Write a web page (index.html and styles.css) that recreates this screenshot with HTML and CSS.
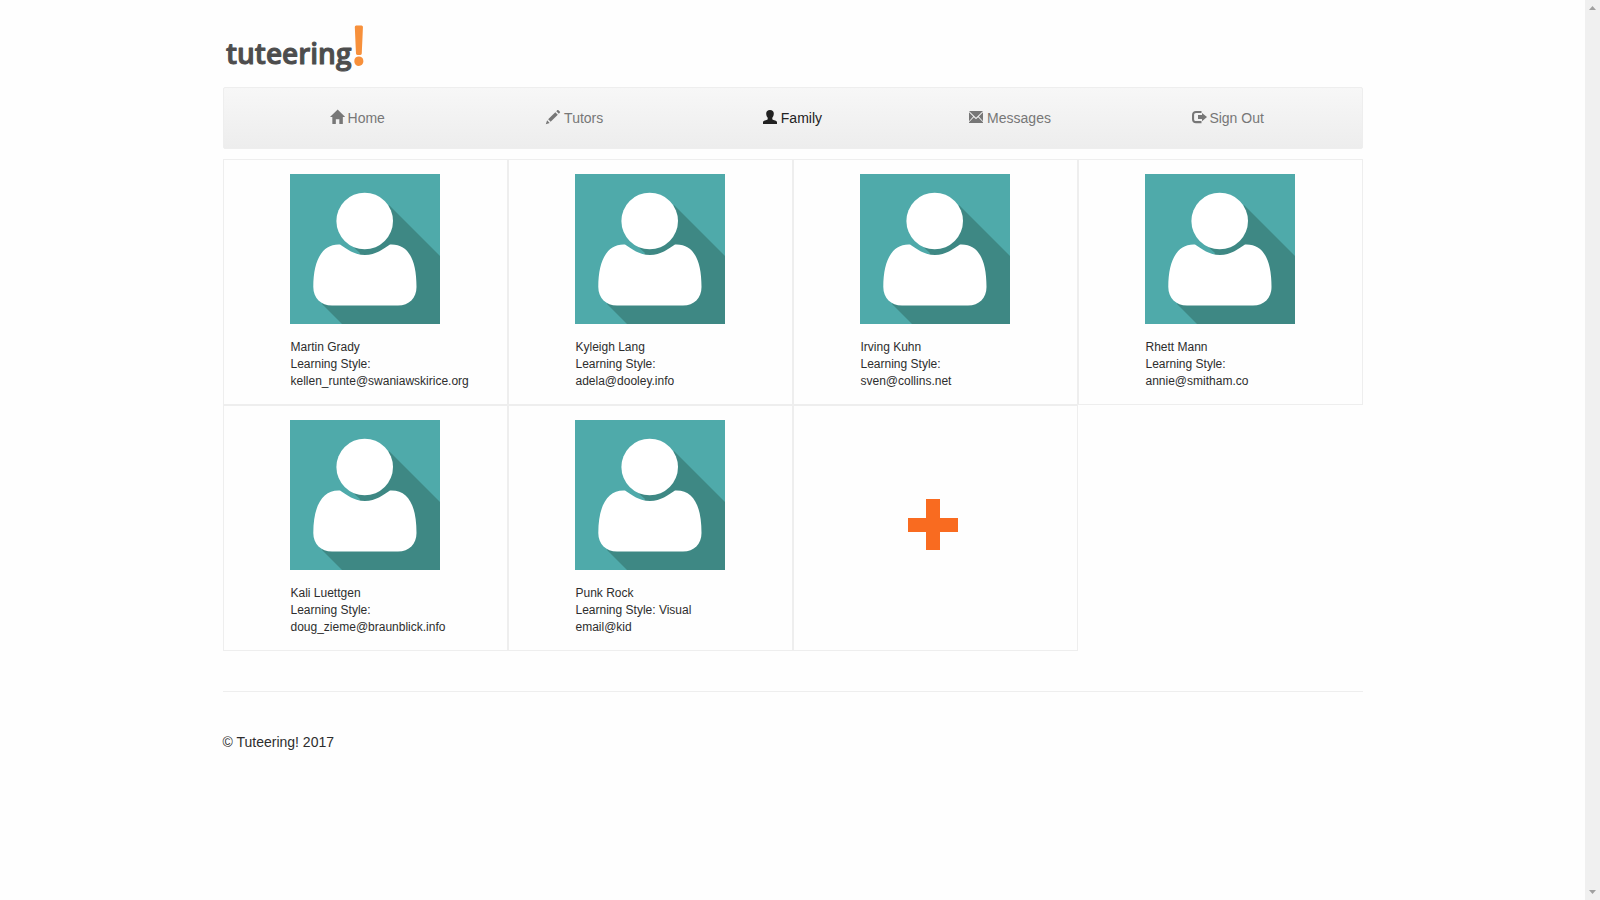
FILE: index.html
```html
<!DOCTYPE html>
<html lang="en">
<head>
<meta charset="utf-8">
<title>Tuteering!</title>
<link rel="stylesheet" href="styles.css">
</head>
<body>
<svg class="defs" aria-hidden="true">
  <symbol id="avatar" viewBox="0 0 150 150">
    <rect width="150" height="150" fill="#4faaaa"/>
    <path d="M99 31 150 82V150H52L32 130 60 100 70 79 61 71z" fill="#3e8884"/>
    <path d="M48 70C52 71 62 80 68 80L60 72z" fill="#4faaaa"/>
    <circle cx="74.700" cy="47" r="28.300" fill="#fff"/>
    <path d="M50 70.500C57 75 64 81 75 81S93 75 100 70.500C118 69.500 126.500 85 126.500 113C126.500 124 119 131.500 108 131.500H42C31 131.500 23.300 124 23.300 113C23.300 85 33 69.500 50 70.500z" fill="#fff"/>
  </symbol>
</svg>
<div class="page">
  <div class="container">
    <header class="header">
      <a class="logo" href="#" aria-label="tuteering!">
        <svg width="144" height="56" viewBox="0 0 144 56">
          <text class="logo-word" x="3" y="44">tuteering</text>
          <text class="logo-mark" x="129" y="44">!</text>
        </svg>
      </a>
    </header>
    <nav class="nav">
      <a class="nav-link" href="#"><svg class="icon" viewBox="0 0 1200 1200"><path transform="matrix(1 0 0 -1 0 1200)" d="M18 618l620 608q8 7 18.500 7t17.500 -7l608 -608q8 -8 5.500 -13t-12.500 -5h-175v-575q0 -10 -7.500 -17.500t-17.500 -7.500h-250q-10 0 -17.500 7.500t-7.500 17.500v375h-300v-375q0 -10 -7.500 -17.500t-17.500 -7.500h-250q-10 0 -17.500 7.500t-7.500 17.500v575h-175q-10 0 -12.500 5t5.500 13z"/></svg> Home</a>
      <a class="nav-link" href="#"><svg class="icon" viewBox="0 0 1200 1200"><path transform="matrix(1 0 0 -1 0 1200)" d="M1011 1210q19 0 33 -13l153 -153q13 -14 13 -33t-13 -33l-99 -92l-214 214l95 96q13 14 32 14zM1013 800l-615 -614l-214 214l614 614zM317 96l-333 -112l110 335z"/></svg> Tutors</a>
      <a class="nav-link active" href="#" aria-current="page"><svg class="icon" viewBox="0 0 14 14"><path d="M7 0C4.600 0 3.200 1.300 3.200 3.500 3.200 5 3.600 6.500 4.700 7.800V9.300C3.500 10.400 0 10.600 0 12.200V14H14V12.200C14 10.600 10.500 10.400 9.300 9.300V7.800C10.400 6.500 10.800 5 10.800 3.500 10.800 1.300 9.400 0 7 0z"/></svg> Family</a>
      <a class="nav-link" href="#"><svg class="icon" viewBox="0 0 14 14"><path d="M0 1H14L7 7.800zM0 2.200 4.200 6.400 0 11.200zM14 2.200V11.200L9.800 6.400zM4.800 7.200 7 9.300 9.200 7.200 14 12.300V13H0V12.300z"/></svg> Messages</a>
      <a class="nav-link" href="#"><svg class="icon" viewBox="0 0 14 14"><path d="M9.500 1H4C1.600 1 0 2.600 0 5V9.200C0 11.600 1.600 13.200 4 13.200H9.500V11.100H4C2.800 11.100 2.100 10.400 2.100 9.200V5C2.100 3.800 2.800 3.100 4 3.100H9.500zM10 2.900 15 7.100 10 11.300V9.100H6V5.100H10z"/></svg> Sign Out</a>
    </nav>
    <main class="cards">
      <article class="card"><svg class="avatar"><use href="#avatar"/></svg><p class="info">Martin Grady<br>Learning Style:<br>kellen_runte@swaniawskirice.org</p></article>
      <article class="card"><svg class="avatar"><use href="#avatar"/></svg><p class="info">Kyleigh Lang<br>Learning Style:<br>adela@dooley.info</p></article>
      <article class="card"><svg class="avatar"><use href="#avatar"/></svg><p class="info">Irving Kuhn<br>Learning Style:<br>sven@collins.net</p></article>
      <article class="card"><svg class="avatar"><use href="#avatar"/></svg><p class="info">Rhett Mann<br>Learning Style:<br>annie@smitham.co</p></article>
      <article class="card"><svg class="avatar"><use href="#avatar"/></svg><p class="info">Kali Luettgen<br>Learning Style:<br>doug_zieme@braunblick.info</p></article>
      <article class="card"><svg class="avatar"><use href="#avatar"/></svg><p class="info">Punk Rock<br>Learning Style: Visual<br>email@kid</p></article>
      <a class="card card-add" href="#" aria-label="Add family member"><svg width="54" height="58" viewBox="0 0 54 58"><path d="M18 0H32V19H50V33H32V51H18V33H0V19H18z"/></svg></a>
    </main>
    <footer class="footer">© Tuteering! 2017</footer>
  </div>
</div>
<div class="scrollbar" aria-hidden="true">
  <svg width="15" height="15" viewBox="0 0 15 15"><path d="M4 10H11L7.500 6z"/></svg>
  <svg width="15" height="15" viewBox="0 0 15 15"><path d="M4 5H11L7.500 9z"/></svg>
</div>
</body>
</html>
```
FILE: styles.css
```css
* {
  box-sizing: border-box;
}

body {
  display: flex;
  min-height: 100vh;
  margin: 0;
  background: #fefefe;
  color: #2d2d2d;
  font: 14px/20px "Liberation Sans", Arial, sans-serif;
}

.defs {
  position: absolute;
  width: 0;
  height: 0;
}

.page {
  flex: 1;
}

.container {
  max-width: 1140px;
  margin: 0 auto;
}

.header {
  padding: 20px 0 11px;
}

.logo {
  display: block;
  width: 144px;
}

.logo svg {
  display: block;
  overflow: visible;
}

.logo-word {
  fill: #4d4d4d;
  stroke: #4d4d4d;
  stroke-width: 1px;
  stroke-linejoin: round;
  font: 600 28px "Open Sans", sans-serif;
}

.logo-mark {
  fill: #f7903b;
  stroke: #f7903b;
  stroke-width: 3px;
  stroke-linejoin: round;
  font: 400 52px "Open Sans", sans-serif;
}

.nav {
  display: grid;
  grid-template-columns: repeat(5, 1fr);
  padding: 20px 25px;
  border: 1px solid #eee;
  border-radius: 2px;
  background: linear-gradient(#f7f7f7, #ededed);
  text-align: center;
}

.nav-link {
  color: #777;
  text-decoration: none;
}

.nav-link.active {
  color: #222;
}

.icon {
  width: 14px;
  height: 14px;
  overflow: visible;
  vertical-align: -1px;
  fill: currentColor;
}

.cards {
  display: grid;
  grid-template-columns: repeat(4, 1fr);
  margin-top: 10px;
}

.card {
  display: flex;
  flex-direction: column;
  align-items: center;
  padding: 14px 0;
  border: 1px solid #eee;
}

.avatar {
  width: 150px;
  height: 150px;
}

.info {
  width: 149px;
  margin: 15px 0 0;
  font-size: 12px;
  line-height: 17px;
  white-space: nowrap;
}

.card-add {
  justify-content: center;
  fill: #f96b20;
}

.footer {
  margin-top: 40px;
  padding: 40px 0;
  border-top: 1px solid #eee;
}

.scrollbar {
  position: sticky;
  top: 0;
  display: flex;
  flex-direction: column;
  justify-content: space-between;
  width: 15px;
  height: 100vh;
  background: #f0f0f0;
  fill: #a0a0a0;
}
```
